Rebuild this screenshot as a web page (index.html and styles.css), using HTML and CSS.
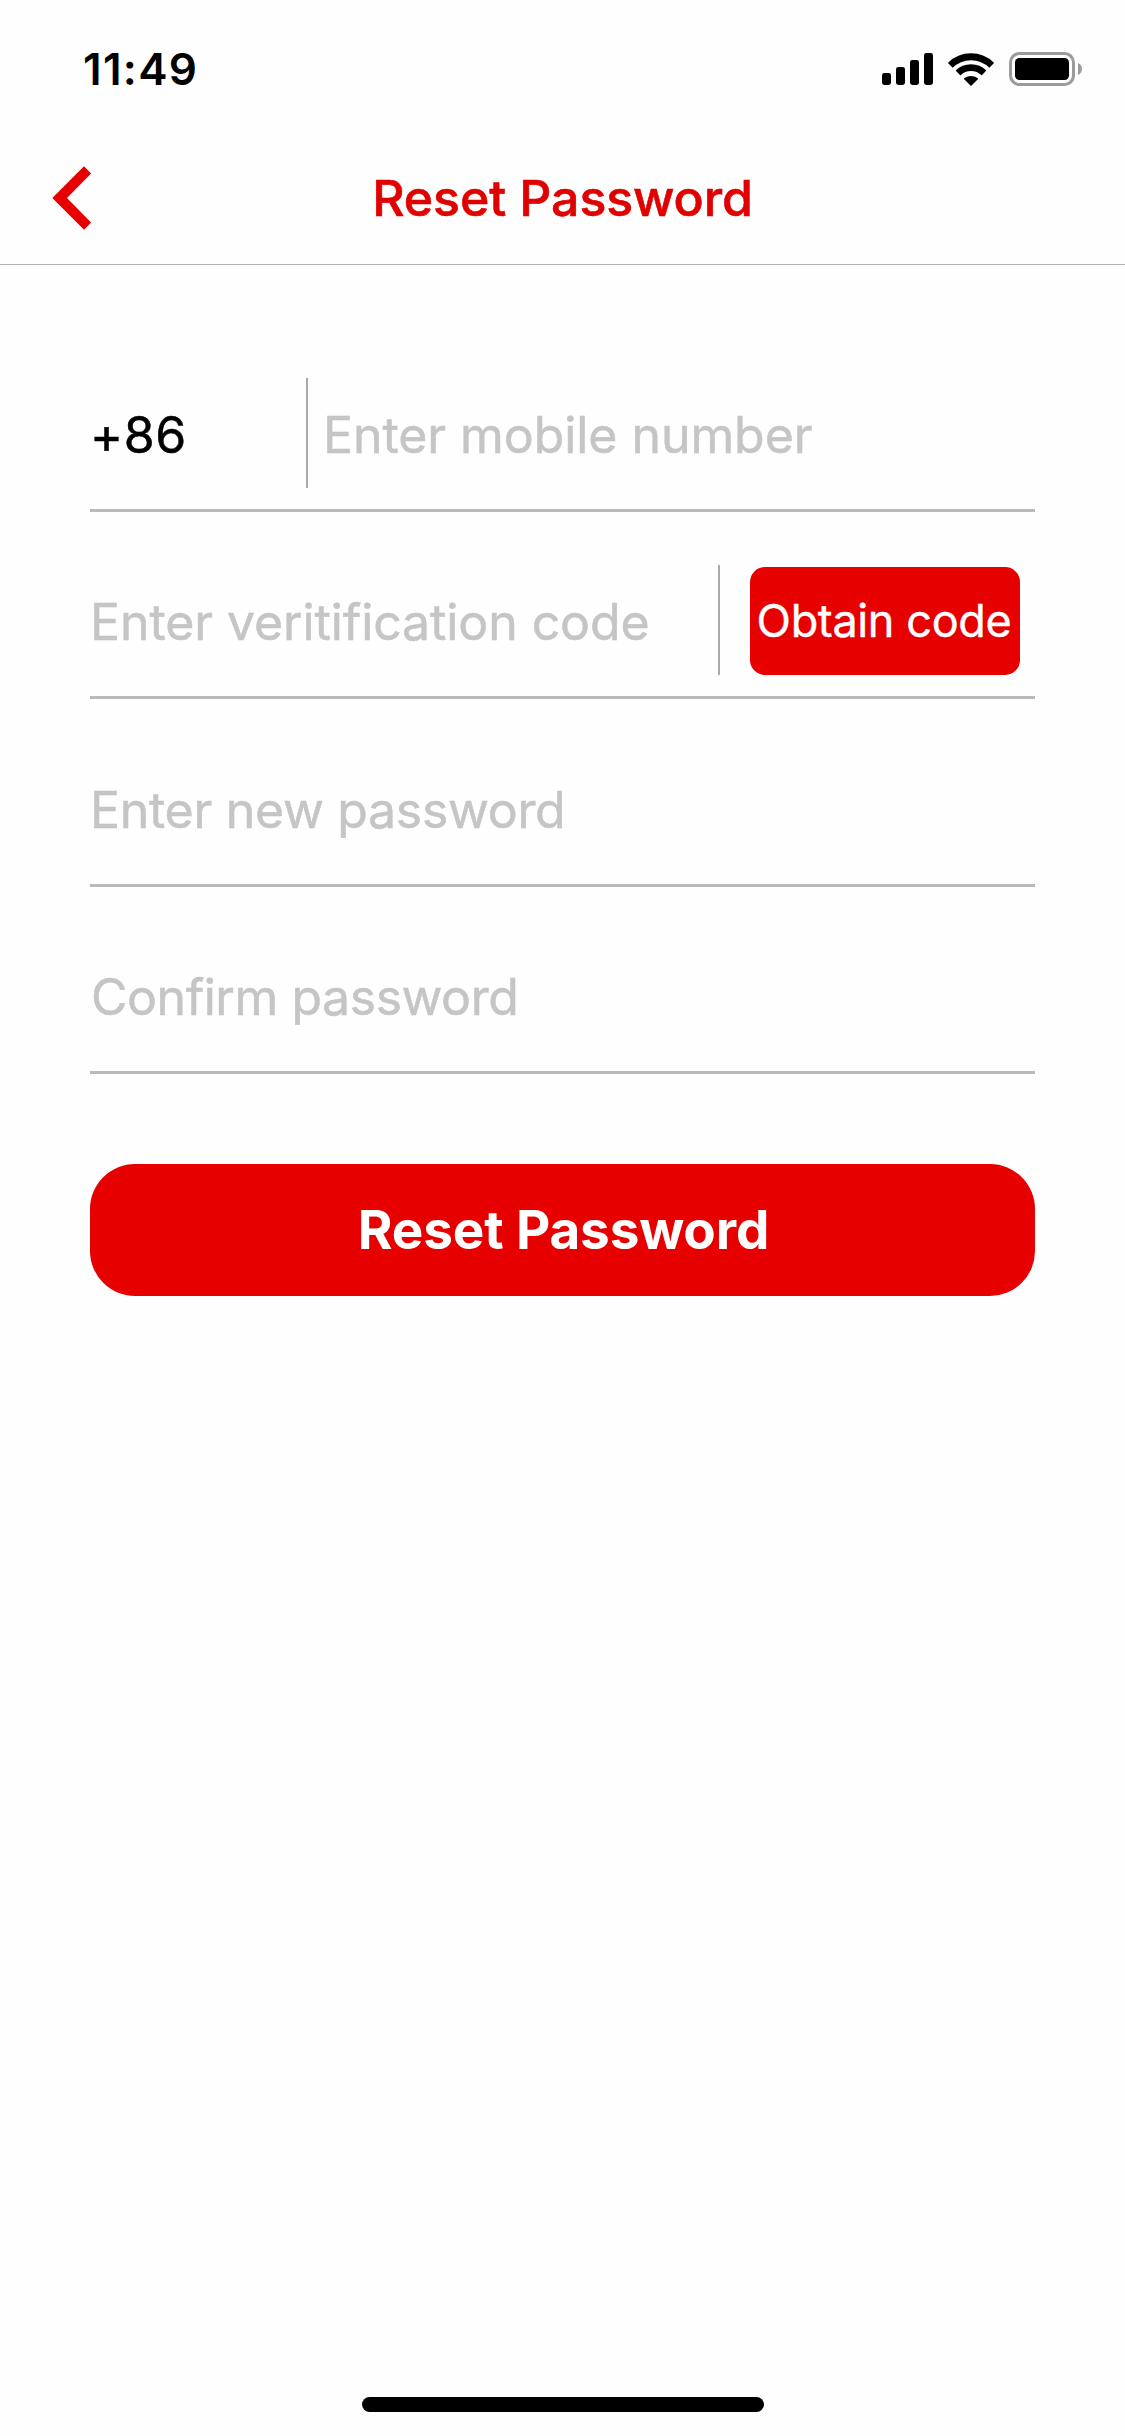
FILE: index.html
```
<!DOCTYPE html>
<html lang="en">
<head>
<meta charset="utf-8">
<title>Reset Password</title>
<link rel="stylesheet" href="styles.css">
</head>
<body>
<div class="screen">
  <div class="status-bar">
    <span class="time">11:49</span>
    <div class="status-icons">
      <svg class="signal" width="51" height="32" viewBox="0 0 51 32" aria-hidden="true">
        <rect x="0" y="20" width="9" height="12" rx="2.4"/>
        <rect x="14" y="14" width="9" height="18" rx="2.4"/>
        <rect x="28" y="7" width="9" height="25" rx="2.4"/>
        <rect x="42" y="0" width="9" height="32" rx="2.4"/>
      </svg>
      <svg class="wifi" width="48" height="33" viewBox="0 0 48 33" aria-hidden="true">
        <path class="wifi-arc" d="M3.3 12.3A29.3 29.3 0 0 1 44.7 12.3M11 20A18.5 18.5 0 0 1 37 20"/>
        <path d="M24 33 16.9 25.9Q17 25.4 17.6 25A10.8 10.8 0 0 1 30.4 25Q31 25.4 31.1 25.9Z"/>
      </svg>
      <svg class="battery" width="74" height="34" viewBox="0 0 74 34" aria-hidden="true">
        <rect class="battery-shell" x="1.5" y="1.5" width="63" height="31" rx="9"/>
        <rect x="6" y="6" width="54" height="22" rx="4.5"/>
        <path class="battery-cap" d="M69 11C74.3 13 74.3 21 69 23Z"/>
      </svg>
    </div>
  </div>

  <header class="nav">
    <svg class="back" width="40" height="64" viewBox="0 0 40 64" role="img" aria-label="Back">
      <path d="M0.3 32 32 0.3 39.1 7.4 15 32 39.1 56.6 32 63.7Z"/>
    </svg>
    <h1 class="title">Reset Password</h1>
  </header>

  <main class="form">
    <div class="field">
      <span class="prefix">+86</span>
      <span class="divider"></span>
      <span class="placeholder mobile">Enter mobile number</span>
    </div>
    <div class="field">
      <span class="placeholder">Enter veritification code</span>
      <span class="divider"></span>
      <button class="obtain" type="button">Obtain code</button>
    </div>
    <div class="field field-new">
      <span class="placeholder new-password">Enter new password</span>
    </div>
    <div class="field">
      <span class="placeholder confirm">Confirm password</span>
    </div>
    <button class="submit" type="button">Reset Password</button>
  </main>

  <div class="home-indicator"></div>
</div>
</body>
</html>
```
FILE: styles.css
```
* { box-sizing: border-box; }

body {
  margin: 0;
  background: #fefefe;
  color: #000;
  font-family: Inter, "Liberation Sans", sans-serif;
}

button {
  border: 0;
  padding: 0;
  font-family: inherit;
  color: #fff;
  background: #e60000;
}

.screen {
  display: flex;
  flex-direction: column;
  width: 1125px;
  height: 2436px;
}

/* Status bar */
.status-bar {
  display: flex;
  align-items: center;
  justify-content: space-between;
  height: 132px;
  padding: 6px 42px 0 83px;
}

.time {
  font-size: 44px;
  font-weight: 600;
  line-height: 60px;
  letter-spacing: 1.3px;
}

.status-icons {
  display: flex;
  align-items: center;
}

.wifi { margin-left: 14px; }
.battery { margin-left: 14px; }

.wifi-arc {
  fill: none;
  stroke: #000;
  stroke-width: 6.8;
}

.battery-shell {
  fill: none;
  stroke: #9b9b9b;
  stroke-width: 3;
}

.battery-cap { fill: #9b9b9b; }

/* Navigation bar */
.nav {
  display: grid;
  grid-template-columns: 1fr auto 1fr;
  align-items: center;
  height: 133px;
  padding: 0 52px;
  border-bottom: 1px solid #b2b2b2;
}

.back { fill: #e60000; }

.title {
  margin: 0;
  color: #e00000;
  font-size: 50px;
  font-weight: 500;
  line-height: 60px;
  letter-spacing: -0.1px;
  -webkit-text-stroke: 0.6px currentColor;
}

/* Form */
.form {
  display: flex;
  flex-direction: column;
  padding: 60px 90px 0;
}

.field {
  display: flex;
  align-items: center;
  height: 187px;
  padding: 53px 15px 21px 0;
  border-bottom: 3px solid #b9b9b9;
  font-size: 50px;
  line-height: 60px;
}

.field-new {
  height: 188px;
  padding-top: 54px;
}

.prefix {
  width: 216px;
  padding-top: 4px;
  letter-spacing: 0.6px;
  -webkit-text-stroke: 0.5px currentColor;
}

.placeholder {
  flex: 1;
  padding-top: 4px;
  color: #c5c5c5;
  letter-spacing: -0.1px;
  white-space: nowrap;
  -webkit-text-stroke: 0.5px currentColor;
}

.mobile { padding-left: 15px; letter-spacing: -0.07px; }
.new-password { letter-spacing: -0.3px; }
.confirm { padding-left: 1px; letter-spacing: -0.46px; }

.divider {
  width: 2px;
  height: 110px;
  background: #a9a9a9;
}

.obtain {
  width: 270px;
  height: 108px;
  margin: 2px 0 0 30px;
  padding: 0 2px 2px 0;
  border-radius: 15px;
  font-size: 45px;
  letter-spacing: -0.36px;
  white-space: nowrap;
  -webkit-text-stroke: 0.4px currentColor;
}

.submit {
  height: 132px;
  margin-top: 90px;
  padding-left: 2px;
  border-radius: 45px;
  font-size: 53px;
  font-weight: 700;
  letter-spacing: -0.14px;
}

.home-indicator {
  width: 402px;
  height: 15px;
  margin: auto auto 24px;
  border-radius: 8px;
  background: #000;
}
```
